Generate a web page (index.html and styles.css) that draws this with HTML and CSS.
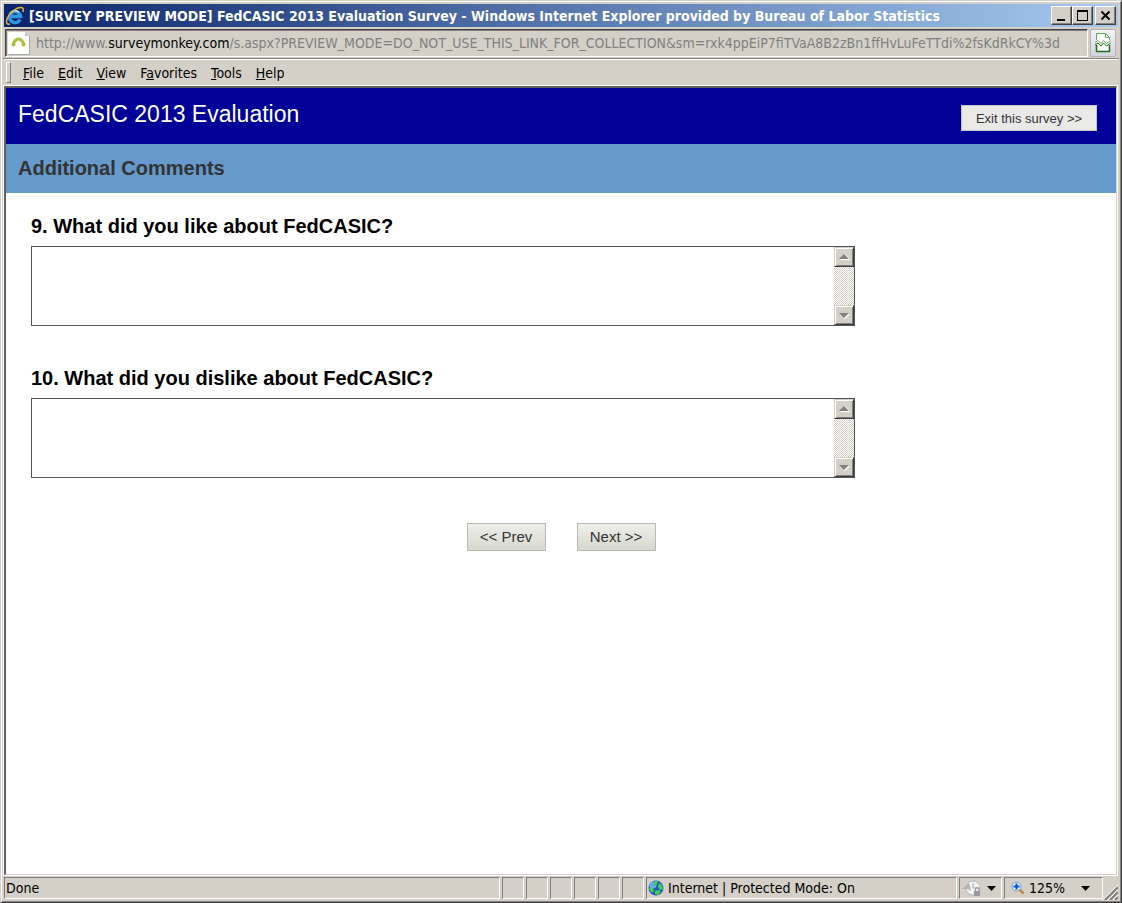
FILE: index.html
```html
<!DOCTYPE html>
<html lang="en">
<head>
    <meta charset="UTF-8">
    <meta name="viewport" content="width=device-width, initial-scale=1.0">
    <title>FedCASIC 2013 Evaluation Survey</title>
    <link rel="stylesheet" href="styles.css">
</head>
<body>
    <div class="window">
        <header class="title-bar">
            <svg class="ie-icon" width="20" height="20" viewBox="0 0 20 20" aria-hidden="true">
                <path d="M15 13.500A5.500 5.500 0 1 1 15.500 10.500H6" fill="none" stroke="#2f97e4" stroke-width="3.400"/>
                <path d="M5 7.500A5.600 5.600 0 0 1 14 6.500" fill="none" stroke="#a4e0fc" stroke-width="1.600"/>
                <path d="M5 18C-1 19.500 1 11 8 5C13 .5 20 -.5 18 6" fill="none" stroke="#e8b030" stroke-width="1.500"/>
            </svg>
            <span class="title-text">[SURVEY PREVIEW MODE] FedCASIC 2013 Evaluation Survey - Windows Internet Explorer provided by Bureau of Labor Statistics</span>
            <div class="window-buttons">
                <button class="window-button" aria-label="Minimize">
                    <svg width="12" height="12" viewBox="0 0 12 12"><path d="M1 9h8v2H1z"/></svg>
                </button>
                <button class="window-button" aria-label="Maximize">
                    <svg width="12" height="12" viewBox="0 0 12 12"><path d="M0 0h11v11H0zM1 2v8h9V2z" fill-rule="evenodd"/></svg>
                </button>
                <button class="window-button close" aria-label="Close">
                    <svg width="12" height="12" viewBox="0 0 12 12"><path d="M1.500 1.500l8 8M9.500 1.500l-8 8" stroke="#000" stroke-width="2"/></svg>
                </button>
            </div>
        </header>

        <div class="address-bar">
            <div class="address">
                <svg width="22" height="24" viewBox="0 0 22 24" aria-hidden="true">
                    <path d="M0 1h17l4 4v18H0z" fill="#fff"/>
                    <path d="M17 1v4h4z" fill="#c0c0c0"/>
                    <path d="M21.500 5v18.500H1" fill="none" stroke="#aaa"/>
                    <path d="M5 13C6.500 11 7 8 10.500 8S14.500 11 16 13" fill="none" stroke="#a6c23c" stroke-width="3"/>
                    <circle cx="5.500" cy="13.500" r="2" fill="#a6c23c"/>
                    <circle cx="15.500" cy="13.500" r="2" fill="#a6c23c"/>
                </svg>
                <span class="url">http://www.<b>surveymonkey.com</b>/s.aspx?PREVIEW_MODE=DO_NOT_USE_THIS_LINK_FOR_COLLECTION&amp;sm=rxk4ppEiP7fiTVaA8B2zBn1ffHvLuFeTTdi%2fsKdRkCY%3d</span>
            </div>
            <button class="compat-button" aria-label="Compatibility View">
                <svg width="16" height="20" viewBox="0 0 16 20">
                    <path d="M1.500 .5h9l4 4v14h-13z" fill="#fff"/>
                    <path d="M1.500 7V.5h9l4 4V7M10.500 .5v4h4" fill="none" stroke="#5cab5c"/>
                    <path d="M1.500 12v6.500h13V12" fill="none" stroke="#177017" stroke-width="1.500"/>
                    <path d="M0 9.500l3-2 3 3 2.500-3 3 3 4-3" fill="none" stroke="#5cab5c"/>
                    <path d="M0 12l3-2 3 3 2.500-3 3 3 4-3" fill="none" stroke="#177017"/>
                </svg>
            </button>
        </div>

        <nav class="menu-bar">
            <a href="#"><u>F</u>ile</a>
            <a href="#"><u>E</u>dit</a>
            <a href="#"><u>V</u>iew</a>
            <a href="#">F<u>a</u>vorites</a>
            <a href="#"><u>T</u>ools</a>
            <a href="#"><u>H</u>elp</a>
        </nav>

        <main class="page">
            <div class="survey-header">
                <h1>FedCASIC 2013 Evaluation</h1>
                <button class="exit-button">Exit this survey &gt;&gt;</button>
            </div>
            <h2 class="section-title">Additional Comments</h2>
            <form class="survey">
                <div class="question">
                    <label for="q9">9. What did you like about FedCASIC?</label>
                    <div class="answer">
                        <textarea id="q9"></textarea>
                        <div class="scrollbar">
                            <button type="button" class="scroll-button" aria-label="Scroll up">
                                <svg width="12" height="8" viewBox="0 0 12 8"><path d="M2 7h10v-1l-5-5z" fill="#fff"/><path d="M1 6h10L6 1z" fill="#808080"/></svg>
                            </button>
                            <button type="button" class="scroll-button" aria-label="Scroll down">
                                <svg width="12" height="8" viewBox="0 0 12 8"><path d="M2 3h10L7 8z" fill="#fff"/><path d="M1 2h10L6 7z" fill="#808080"/></svg>
                            </button>
                        </div>
                    </div>
                </div>
                <div class="question">
                    <label for="q10">10. What did you dislike about FedCASIC?</label>
                    <div class="answer">
                        <textarea id="q10"></textarea>
                        <div class="scrollbar">
                            <button type="button" class="scroll-button" aria-label="Scroll up">
                                <svg width="12" height="8" viewBox="0 0 12 8"><path d="M2 7h10v-1l-5-5z" fill="#fff"/><path d="M1 6h10L6 1z" fill="#808080"/></svg>
                            </button>
                            <button type="button" class="scroll-button" aria-label="Scroll down">
                                <svg width="12" height="8" viewBox="0 0 12 8"><path d="M2 3h10L7 8z" fill="#fff"/><path d="M1 2h10L6 7z" fill="#808080"/></svg>
                            </button>
                        </div>
                    </div>
                </div>
                <div class="survey-nav">
                    <button type="button" class="nav-button">&lt;&lt; Prev</button>
                    <button type="button" class="nav-button">Next &gt;&gt;</button>
                </div>
            </form>
        </main>

        <footer class="status-bar">
            <div class="status-pane status-text">Done</div>
            <div class="status-pane blank"></div>
            <div class="status-pane blank"></div>
            <div class="status-pane blank"></div>
            <div class="status-pane blank"></div>
            <div class="status-pane blank"></div>
            <div class="status-pane blank"></div>
            <div class="status-pane zone">
                <svg width="16" height="16" viewBox="0 0 16 16" aria-hidden="true">
                    <circle cx="8" cy="8" r="7.500" fill="#2459c4"/>
                    <circle cx="5" cy="5" r="3.500" fill="#6aa6f4"/>
                    <path d="M7 1l3 0-1 3-2 2-2-1zM11 3l3 2 1 4-3 1-2-3zM2 7l3 1 1 3-2 2-3-4zM7 11l4-1 2 2-3 3-3-1z" fill="#3fd04a"/>
                </svg>
                Internet | Protected Mode: On
            </div>
            <button class="status-pane privacy" aria-label="Privacy">
                <svg width="20" height="18" viewBox="0 0 20 18">
                    <circle cx="11" cy="9" r="7" fill="#f4f4f4" stroke="#bbb"/>
                    <path d="M11 4v5h5" fill="none" stroke="#aaa"/>
                    <path d="M0 10l7-6 1 3 1 5-3-2z" fill="#b4b4b4"/>
                    <path d="M13.500 12v-2a1.800 1.800 0 0 1 3.500 0v2" fill="none" stroke="#999" stroke-width="1.300"/>
                    <path d="M12 12h6v5h-6z" fill="#999"/>
                </svg>
                <svg width="9" height="5" viewBox="0 0 9 5"><path d="M0 0h9L4.500 5z"/></svg>
            </button>
            <button class="status-pane zoom">
                <svg width="14" height="14" viewBox="0 0 14 14">
                    <path d="M8 8l4.500 4.500" stroke="#b88848" stroke-width="2.500"/>
                    <circle cx="5.500" cy="5.500" r="4.500" fill="#e4f2ff" stroke="#6b9bd0"/>
                    <path d="M5.500 2.500v6M2.500 5.500h6" stroke="#0a50c8" stroke-width="2"/>
                </svg>
                <span>125%</span>
                <svg class="zoom-arrow" width="9" height="5" viewBox="0 0 9 5"><path d="M0 0h9L4.500 5z"/></svg>
            </button>
            <svg class="grip" width="15" height="15" viewBox="0 0 15 15" aria-hidden="true">
                <path d="M0 15L15 0M5 15L15 5M10 15l5-5" stroke="#fff"/>
                <path d="M2 15L15 2M7 15l8-8M12 15l3-3" stroke="#808080" stroke-width="2"/>
            </svg>
        </footer>
    </div>
</body>
</html>
```
FILE: styles.css
```css
* {
    box-sizing: border-box;
}
body {
    margin: 0;
    font-family: "DejaVu Sans Condensed", Tahoma, "DejaVu Sans", sans-serif;
    font-size: 14px;
    color: #000;
    background-color: #d4d0c8;
}
button {
    font-family: inherit;
    font-size: inherit;
    color: inherit;
    padding: 0;
    margin: 0;
}
svg {
    display: block;
    flex: none;
}
.window {
    display: flex;
    flex-direction: column;
    min-height: 100vh;
    padding: 2px;
    border: 1px solid;
    border-color: #d4d0c8 #404040 #404040 #d4d0c8;
    box-shadow: inset 1px 1px #fff, inset -1px -1px #808080;
}
.title-bar {
    display: flex;
    align-items: center;
    gap: 4px;
    height: 23px;
    margin: 1px 1px 0;
    padding: 0 2px 0 1px;
    color: #fff;
    font-weight: bold;
    background: linear-gradient(to right, #0a246a, #a6caf0);
}
.title-text {
    flex: 1;
    min-width: 0;
    overflow: hidden;
    white-space: nowrap;
}
.window-buttons {
    display: flex;
}
.window-button {
    display: flex;
    align-items: center;
    justify-content: center;
    width: 21px;
    height: 19px;
    background-color: #d4d0c8;
    border: 1px solid;
    border-color: #fff #404040 #404040 #fff;
    box-shadow: inset -1px -1px #808080;
}
.window-button.close {
    margin-left: 2px;
}
.address-bar {
    display: flex;
    gap: 2px;
    height: 32px;
    padding: 2px 3px 1px 2px;
    border-bottom: 1px solid #808080;
}
.address {
    flex: 1;
    min-width: 0;
    display: flex;
    align-items: center;
    gap: 6px;
    padding-left: 2px;
    border: 1px solid;
    border-color: #404040 #fff #fff #404040;
    box-shadow: inset 1px 1px #808080;
}
.url {
    color: #808080;
    white-space: nowrap;
    overflow: hidden;
}
.url b {
    color: #000;
    font-weight: normal;
}
.compat-button {
    display: flex;
    align-items: center;
    justify-content: center;
    width: 26px;
    background: linear-gradient(#f4f4f6, #d4d4e0);
    border: 1px solid #b4b4b8;
    border-radius: 2px;
}
.menu-bar {
    display: flex;
    align-items: center;
    gap: 14px;
    height: 27px;
    margin: 0 1px;
    padding-left: 2px;
    border-top: 1px solid #fff;
    border-bottom: 1px solid #808080;
}
.menu-bar::before {
    content: "";
    width: 3px;
    height: 19px;
    margin-right: -2px;
    border: 1px solid;
    border-color: #fff #808080 #808080 #fff;
}
.menu-bar a {
    color: #000;
    text-decoration: none;
}
.page {
    flex: 1;
    margin: 0 2px 0 1px;
    font-family: "Liberation Sans", Arial, sans-serif;
    background-color: #fff;
    border: 2px solid;
    border-color: #606060 #d4d0c8 #d4d0c8 #606060;
    border-right-width: 1px;
    border-bottom-width: 1px;
    outline: 1px solid #fff;
}
.survey-header {
    display: flex;
    justify-content: space-between;
    align-items: flex-start;
    height: 56px;
    padding: 12px 19px 0 12px;
    color: #fff;
    background-color: #009;
}
.survey-header h1 {
    margin: 0;
    font-size: 23px;
    line-height: 28px;
    font-weight: normal;
}
.exit-button {
    width: 136px;
    height: 26px;
    margin-top: 5px;
    font-size: 13px;
    color: #333;
    background-color: #e9e9e8;
    border: 1px solid #c4c4c4;
}
.section-title {
    margin: 0;
    padding: 0 12px;
    font-size: 20px;
    line-height: 49px;
    color: #333;
    background-color: #69c;
}
.survey {
    padding: 19px 25px;
}
.question {
    margin-bottom: 38px;
}
.question label {
    display: block;
    margin-bottom: 6px;
    font-size: 20px;
    line-height: 28px;
    font-weight: bold;
}
.answer {
    display: flex;
    max-width: 824px;
    height: 80px;
    border: 1px solid #555;
}
.answer textarea {
    flex: 1;
    min-width: 0;
    border: none;
    outline: none;
    resize: none;
    overflow: hidden;
    font-size: 16px;
}
.scrollbar {
    display: flex;
    flex-direction: column;
    justify-content: space-between;
    width: 20px;
    background: repeating-conic-gradient(#d4d0c8 0 25%, #fff 0 50%) 0 0 / 2px 2px;
}
.scroll-button {
    display: flex;
    align-items: center;
    justify-content: center;
    height: 20px;
    background-color: #d4d0c8;
    border: 1px solid;
    border-color: #d4d0c8 #404040 #404040 #d4d0c8;
    box-shadow: inset 1px 1px #fff, inset -1px -1px #808080;
}
.survey-nav {
    display: flex;
    justify-content: center;
    gap: 31px;
    padding-top: 7px;
}
.nav-button {
    width: 79px;
    height: 28px;
    padding-bottom: 2px;
    font-size: 15px;
    color: #333;
    background: linear-gradient(#efefeb, #d6d8ce);
    border: 1px solid #b8bab4;
}
.status-bar {
    display: flex;
    gap: 2px;
    height: 25px;
    margin: 0 1px;
    padding-top: 2px;
}
.status-pane {
    display: flex;
    align-items: center;
    gap: 4px;
    height: 22px;
    padding: 0 1px;
    background-color: transparent;
    border: 1px solid;
    border-color: #808080 #fff #fff #808080;
    white-space: nowrap;
}
.status-text {
    flex: 1;
}
.blank {
    width: 22px;
}
.zone {
    width: 311px;
}
.privacy {
    gap: 5px;
    width: 43px;
    padding: 0 2px;
}
.zoom {
    width: 99px;
    padding: 0 12px 0 6px;
}
.zoom-arrow {
    margin-left: auto;
}
.grip {
    align-self: flex-end;
    margin-left: -2px;
}
```
